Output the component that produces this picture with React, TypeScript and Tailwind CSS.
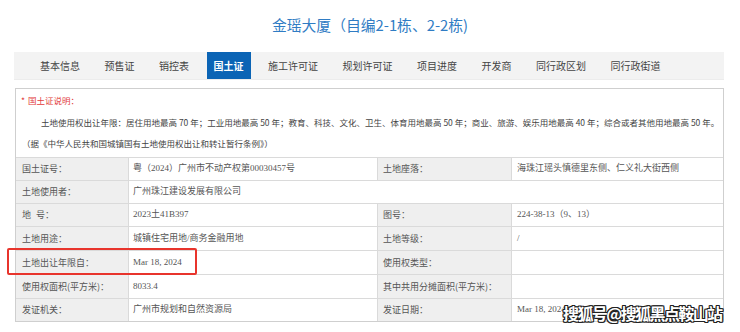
import React from "react";

const CJK = '"Noto Sans CJK SC", "Noto Sans", sans-serif';
const VAL = '"Liberation Serif", "Noto Sans CJK SC", serif';

const tabs = ["基本信息", "预售证", "销控表", "国土证", "施工许可证", "规划许可证", "项目进度", "开发商", "同行政区划", "同行政街道"];

type Row = { h: string; l1: React.ReactNode; v1: string; l2?: string; v2?: string; span?: boolean };

const rows: Row[] = [
  { h: "h-[23px]", l1: "国土证号：", v1: "粤（2024）广州市不动产权第00030457号", l2: "土地座落：", v2: "海珠江瑶头慎德里东侧、仁义礼大街西侧" },
  { h: "h-[23px]", l1: "土地使用者：", v1: "广州珠江建设发展有限公司", span: true },
  { h: "h-[23px]", l1: (<><span>地</span><span className="ml-[5px]">号：</span></>), v1: "2023土41B397", l2: "图号：", v2: "224-38-13（9、13）" },
  { h: "h-[24px]", l1: "土地用途：", v1: "城镇住宅用地/商务金融用地", l2: "土地等级：", v2: "/" },
  { h: "h-[24px]", l1: "土地出让年限自：", v1: "Mar 18, 2024", l2: "使用权类型：", v2: "" },
  { h: "h-[24px]", l1: "使用权面积(平方米)：", v1: "8033.4", l2: "其中共用分摊面积(平方米)：", v2: "" },
  { h: "h-[23px]", l1: "发证机关：", v1: "广州市规划和自然资源局", l2: "发证日期：", v2: "Mar 18, 2024" },
];

export default function App() {
  return (
    <div className="relative w-[740px] h-[332px] bg-white overflow-hidden" style={{ fontFamily: CJK }}>
      <div className="h-[52px] flex items-center justify-center pb-[2px]">
        <div className="text-[14.8px] text-[#2f7cc4]">金瑶大厦（自编2-1栋、2-2栋)</div>
      </div>
      <div className="ml-[14px] w-[710px] h-[28px] bg-[#f3f3f3] border-b border-[#ececec] flex items-stretch pl-[19px] gap-[10.5px]">
        {tabs.map((t) => (
          <div
            key={t}
            className={
              "px-[7px] flex items-center text-[10px] " +
              (t === "国土证" ? "bg-[#0b64b5] text-white font-bold" : "text-[#444]")
            }
          >
            {t}
          </div>
        ))}
      </div>
      <div className="ml-[15px] mt-[8px] w-[709px] border border-[#cfcfcf]">
        <div className="pl-[5px] text-[8.5px] text-[#444]">
          <div className="h-[22px] flex items-center text-[#e23b3b]">
            <span className="mr-[3px]">*</span>国土证说明：
          </div>
          <div className="h-[22px] flex items-center pl-[20px] whitespace-nowrap">
            土地使用权出让年限：居住用地最高 70 年；工业用地最高 50 年；教育、科技、文化、卫生、体育用地最高 50 年；商业、旅游、娱乐用地最高 40 年；综合或者其他用地最高 50 年。
          </div>
          <div className="h-[20px] flex items-center pl-[1px]">（据《中华人民共和国城镇国有土地使用权出让和转让暂行条例》）</div>
          <div className="h-[4px]" />
        </div>
        {rows.map((r, i) => (
          <div key={i} className={"flex border-t border-[#dadada] " + r.h}>
            <div className="w-[113px] shrink-0 bg-[#efefef] border-r border-[#dadada] flex items-center pl-[6px] text-[9px] text-[#555]">
              {r.l1}
            </div>
            {r.span ? (
              <div className="flex-1 flex items-center pl-[4px] text-[9px] text-[#555]" style={{ fontFamily: VAL }}>
                {r.v1}
              </div>
            ) : (
              <>
                <div className="w-[249px] shrink-0 border-r border-[#dadada] flex items-center pl-[4px] text-[9px] text-[#555]" style={{ fontFamily: VAL }}>
                  {r.v1}
                </div>
                <div className="w-[134px] shrink-0 bg-[#efefef] border-r border-[#dadada] flex items-center pl-[5px] text-[9px] text-[#555]">
                  {r.l2}
                </div>
                <div className="flex-1 flex items-center pl-[5px] text-[9px] text-[#555]" style={{ fontFamily: VAL }}>
                  {r.v2}
                </div>
              </>
            )}
          </div>
        ))}
      </div>
      <div className="absolute left-[7px] top-[248px] w-[190px] h-[27px] border-2 border-[#e8342c] rounded-[2px]" />
      <div
        className="absolute left-[563px] top-[305px] text-[16px] tracking-[-1.6px] font-bold text-white leading-none whitespace-nowrap [text-shadow:1px_1px_0_#222,-1px_-1px_0_#222,1px_-1px_0_#222,-1px_1px_0_#222,0_1px_0_#222,1px_0_0_#222,0_-1px_0_#222,-1px_0_0_#222]"
      >
        搜狐号@搜狐黑点鞍山站
      </div>
    </div>
  );
}
